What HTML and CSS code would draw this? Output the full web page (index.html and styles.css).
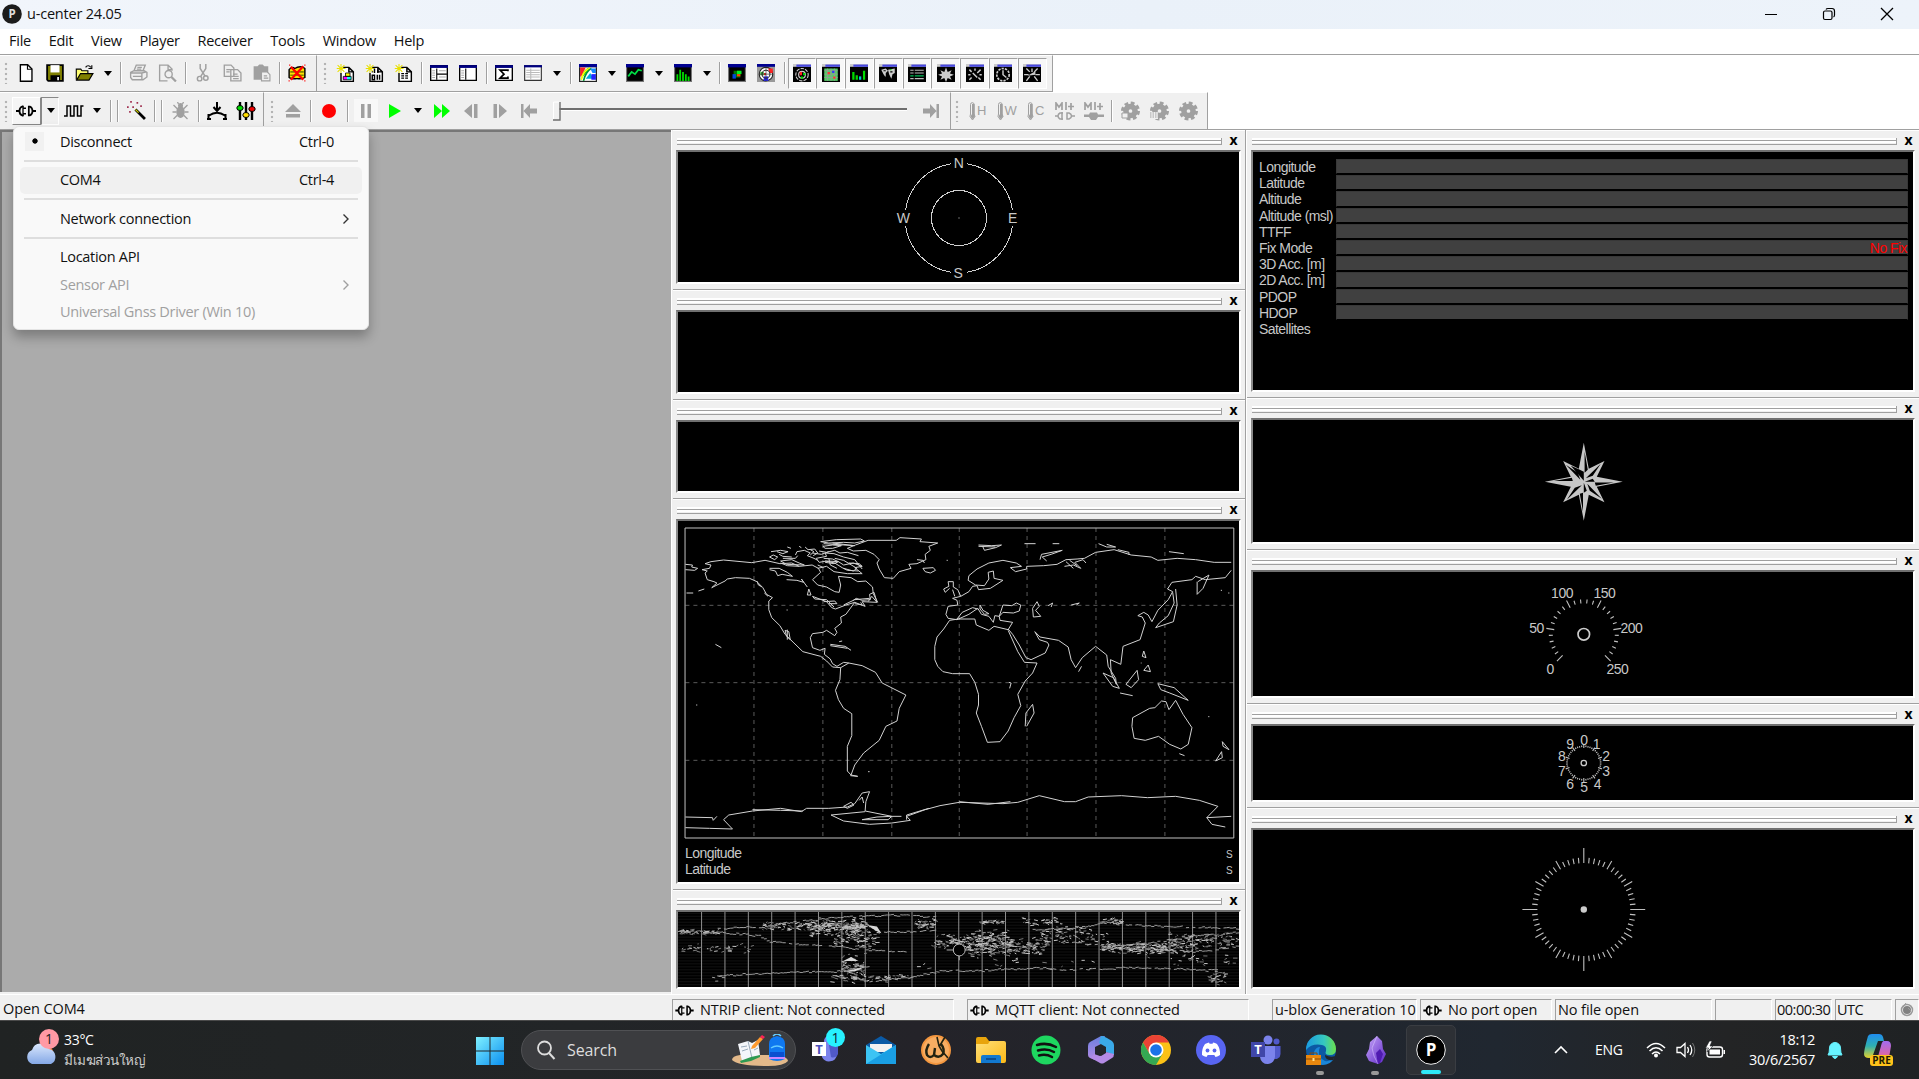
FILE: index.html
```html
<!DOCTYPE html>
<html lang="en">
<head>
<meta charset="utf-8">
<title>u-center 24.05</title>
<link rel="stylesheet" href="styles.css">
</head>
<body>
<svg class="defs" width="0" height="0">
<defs>
<linearGradient id="gw" x1="0" y1="0" x2="1" y2="1"><stop offset="0" stop-color="#7ff0ff"/><stop offset="1" stop-color="#0a8ff0"/></linearGradient>
<linearGradient id="gc" x1="0" y1="0" x2="0" y2="1"><stop offset="0" stop-color="#dbe8fd"/><stop offset="1" stop-color="#84a8e6"/></linearGradient>
<linearGradient id="ge" x1="0" y1="0" x2="1" y2="0"><stop offset="0" stop-color="#1a9be0"/><stop offset=".6" stop-color="#35c7c0"/><stop offset="1" stop-color="#6be04a"/></linearGradient>
<linearGradient id="go" x1="0" y1="0" x2="1" y2="1"><stop offset="0" stop-color="#c9a8fb"/><stop offset="1" stop-color="#5a25c4"/></linearGradient>
<linearGradient id="gm" x1="0" y1="0" x2="0" y2="1"><stop offset="0" stop-color="#6a7fe0"/><stop offset="1" stop-color="#b48be6"/></linearGradient>
<linearGradient id="gf" x1="0" y1="0" x2="1" y2="1"><stop offset="0" stop-color="#ffe07a"/><stop offset="1" stop-color="#fcb916"/></linearGradient>
<linearGradient id="gp" x1="0" y1="0" x2="0" y2="1"><stop offset="0" stop-color="#1f8df0"/><stop offset=".5" stop-color="#2fb0b0"/><stop offset="1" stop-color="#e6d22a"/></linearGradient>
<linearGradient id="gq" x1="0" y1="0" x2="0" y2="1"><stop offset="0" stop-color="#a06cf0"/><stop offset="1" stop-color="#f0648c"/></linearGradient>
<symbol id="new" viewBox="0 0 16 16"><path d="M3 .7h6.500l3.800 3.800v10.800H3z" fill="#fff" stroke="#000" stroke-width="1.200"/><path d="M9.300.7v4h4" fill="none" stroke="#000"/></symbol>
<symbol id="save" viewBox="0 0 16 16"><path d="M1 1h14v14H2l-1-1z" fill="#808000" stroke="#000" stroke-width="1.600"/><path d="M4 1h8v6.500H4z" fill="#fff"/><path d="M4 10h8.500v5H4z" fill="#000"/><path d="M10 11.500h1.500v3H10z" fill="#fff"/></symbol>
<symbol id="open" viewBox="0 0 16 16"><path d="M.7 14V4.500h4l1 1.500H11v2.500" fill="#ffff70" stroke="#000"/><path d="M1 14.300 4.500 8.500h11L12 14.300z" fill="#808000" stroke="#000"/><path d="M9 3c1-2 3.500-2 4.500 0M14.500 1v3h-3" fill="none" stroke="#000"/></symbol>
<symbol id="print" viewBox="0 0 16 16"><g fill="none" stroke="#a0a0a0" stroke-width="1.200"><path d="M4 6 6 1h8l-2 5M1 7.500 4 6h9l2.500 1.500v4L12 14H2.500L1 12z M1 8h10l4-1M3 11h8M7 3h4M6.500 4.500h4M11 8v6"/></g></symbol>
<symbol id="prev" viewBox="0 0 16 16"><g fill="none" stroke="#a0a0a0" stroke-width="1.200"><path d="M8 15H1V1h7.500L12 4.500V6M8.500 1v4H12"/><circle cx="9" cy="9" r="3.200"/><path d="m11.500 11.500 4 4" stroke-width="2"/></g></symbol>
<symbol id="cut" viewBox="0 0 16 16"><g fill="none" stroke="#a0a0a0" stroke-width="1.300"><path d="M5.500 0v4l4.500 7M10.500 0v4L6 11"/><circle cx="5" cy="13" r="2"/><circle cx="10.500" cy="12.500" r="2"/></g></symbol>
<symbol id="copy" viewBox="0 0 16 16"><g fill="#f0f0f0" stroke="#a0a0a0" stroke-width="1.200"><path d="M.7 1h6l2.500 2.500V11H.7zM6.500 5h6l3 3v7h-9z"/><path d="M2.500 5h4M2.500 7h3M8.500 9h4M8.500 11h5M8.500 13h5"/></g></symbol>
<symbol id="paste" viewBox="0 0 16 16"><path d="M1 2h3.500L6 .5h3L10.500 2H14v6H8v6H1z" fill="#a0a0a0"/><path d="M8 7h5l2.500 2.500V15H8zM10 10.500h3M10 12.500h4" fill="#f0f0f0" stroke="#a0a0a0"/></symbol>
<symbol id="del" viewBox="0 0 16 16"><path d="M1 5c2-3 4-2 5-1 3-2 7-2 9 0v8c-3 2-5 1-7 1s-5 1-7-1z" fill="#ffe000" stroke="#000" stroke-width="1.300"/><path d="M2 7h12M2 10h12" stroke="#808000" stroke-width="1.500"/><path d="m2.500 2.500 11 11.500M13.500 2 2.500 14" stroke="#f00" stroke-width="2"/><path d="M1 1h1M14.500 1h1M.5 15h1M14.500 15h1" stroke="#f00"/></symbol>
<symbol id="star" viewBox="0 0 16 16"><path d="M6 3h5l4 4v8.500H4V8M11 3v4h4" fill="#fff" stroke="#000" stroke-width="1.300"/><path d="M4 0v8M0 4h8M1 1l6 6M7 1 1 7" stroke="#e8e000" stroke-width=".9"/></symbol>
<symbol id="n1" viewBox="0 0 16 16"><use href="#star"/><path d="M8 8h4v3H8z" fill="#ff0"/><path d="M6 11h3.500v3H6z" fill="#f0f"/><path d="M9.500 11H13v3H9.500z" fill="#0ff"/><path d="M8 8h4v3H8zM6 11h7v3H6z" fill="none" stroke="#000" stroke-width=".7"/></symbol>
<symbol id="n2" viewBox="0 0 16 16"><use href="#star"/><path d="M8 4v4M11 5v3M6 10h2v4H6zM10.500 9.500V14M12.500 9.500V14M5.500 7h1" fill="none" stroke="#000" stroke-width="1.300"/></symbol>
<symbol id="n3" viewBox="0 0 16 16"><use href="#star"/><path d="M6 8.500h7M6 10.500h7M6 12.500h7" fill="none" stroke="#000" stroke-dasharray="2.500 1"/></symbol>
<symbol id="w1" viewBox="0 0 16 16"><path d="M.6 1.500h14.800v13H.6z" fill="#fff" stroke="#000" stroke-width="1.200"/><path d="M0 1h16v2.500H0z" fill="#000080"/><path d="M6 4v10M6 9h9" stroke="#000"/><path d="M2 6h2.500M2 8h2.500M2 10h2.500M2 12h2.500M8 6h6M8 11.500h6" stroke="#aaa"/></symbol>
<symbol id="w2" viewBox="0 0 16 16"><path d="M.6 1.500h14.800v13H.6z" fill="#fff" stroke="#000" stroke-width="1.200"/><path d="M0 1h16v2.500H0z" fill="#000080"/><path d="M6 4v10" stroke="#000"/><path d="M2 6h2.500M2 8h2.500M2 10h2.500M2 12h2.500" stroke="#aaa"/></symbol>
<symbol id="sg" viewBox="0 0 16 16"><path d="M.6 1.500h14.800v13H.6z" fill="#fff" stroke="#000" stroke-width="1.200"/><path d="M0 1h16v2.500H0z" fill="#000080"/><path d="M11.500 6.500V5.500h-7l3.500 3.500L4.500 12.500h7v-1.500" fill="none" stroke="#000" stroke-width="1.500"/></symbol>
<symbol id="tb" viewBox="0 0 16 16"><path d="M.6 1.500h14.800v13H.6z" fill="#fff" stroke="#333"/><path d="M0 1h16v2H0z" fill="#000080"/><path d="M2 5.500h12M2 7.500h12M2 9.500h12M2 11.500h12M6 4v10" stroke="#bbb"/></symbol>
<symbol id="bw" viewBox="0 0 16 16"><path d="M0 0h16v16H0z" fill="#777"/><path d="M1 1h14v14H1z" fill="#000"/><path d="M0 0h16v3H0z" fill="#000090"/></symbol>
<symbol id="c1" viewBox="0 0 16 16"><use href="#bw"/><path d="M1 3h14v12H1z" fill="#fff"/><path d="M1 3h5L2 11H1z" fill="#f22"/><path d="M2 15C2 8 6 3 10 3l-7 9z" fill="#0c0"/><path d="M2 14C3 9 6 5 10 3.500" fill="none" stroke="#ff0" stroke-width="1.500"/><path d="M4 15C5 10 8 5 11 4" fill="none" stroke="#093" stroke-width="1.500"/><path d="M10 4h5v4h-3z" fill="#18f"/><path d="m6 13 4-5 3 5z" fill="#0ad"/><path d="M11 9h4v5h-4z" fill="#22f"/><path d="M.5 3v12.500h15V3" fill="none" stroke="#222"/></symbol>
<symbol id="c2" viewBox="0 0 16 16"><use href="#bw"/><path d="m2 11 3-4 3 2 3-4 3 1" fill="none" stroke="#0d4" stroke-width="1.500"/></symbol>
<symbol id="c3" viewBox="0 0 16 16"><use href="#bw"/><path d="M3 15V9M5.500 15V5M8 15V7M10.500 15V9M13 15v-4" stroke="#0d0" stroke-width="1.600"/></symbol>
<symbol id="c4" viewBox="0 0 16 16"><use href="#bw"/><path d="M5 6h6v6H5z" fill="#070"/><path d="M8 6h4v3H8z" fill="#0e2"/><path d="M4 9h3v4H4z" fill="#04d"/><path d="M8 9h3v2H8z" fill="#f40"/></symbol>
<symbol id="c5" viewBox="0 0 16 16"><path d="M0 0h16v16H0z" fill="#999"/><path d="M0 0h16v2.500H0z" fill="#000090"/><circle cx="8" cy="9" r="6" fill="#fff" stroke="#222"/><path d="M10 4h4v4h-3zM6 8h2v2H6z" fill="#f22"/><path d="M6 11h4v4H6z" fill="#22f"/><path d="M3 7h3v3H3z" fill="#3b3"/><circle cx="8" cy="9" r="3.500" fill="none" stroke="#333"/><path d="M8 3v12M2 9h12" stroke="#333" stroke-width=".6"/></symbol>
<symbol id="dk" viewBox="0 0 16 16"><path d="M0 0h16v16H0z" fill="#000"/><path d="M0 0h16v2.500H0z" fill="#ccc"/><path d="M3 .5h13v2H3z" fill="#4848e0"/></symbol>
<symbol id="d1" viewBox="0 0 16 16"><use href="#dk"/><g fill="none" stroke="#ccc"><circle cx="8" cy="9.500" r="5.500" stroke-dasharray="3 1"/><circle cx="8" cy="9.500" r="3"/></g><path d="M6 7h2v3H6z" fill="#f22"/><path d="M9 8h2v2H9zM7 11h2v2H7z" fill="#0d0"/></symbol>
<symbol id="d2" viewBox="0 0 16 16"><use href="#dk"/><path d="M2 4h12v11H2z" fill="#5c6"/><path d="M2 6h12M2 9h12M2 12h12M5 4v11M8 4v11M11 4v11" stroke="#999" stroke-width=".7"/><path d="M5 7h2v2H5zM10 11h2v2h-2z" fill="#f33"/><path d="M9 6h2v2H9z" fill="#33f"/></symbol>
<symbol id="d3" viewBox="0 0 16 16"><use href="#dk"/><path d="M3 14V7M6 14v-4M12.500 14V6" stroke="#0d0" stroke-width="2"/><path d="M9 14v-3" stroke="#0cc" stroke-width="2"/></symbol>
<symbol id="d4" viewBox="0 0 16 16"><use href="#dk"/><path d="m2 5 4-1 2 2-2 2v4l-2-3zM8 5l6-1v4l-2 1-1 4-2-4z" fill="#ccc"/><path d="M4 6h2M10 7h2M6 11v2" stroke="#000"/><path d="M10 5h1" stroke="#0d0"/></symbol>
<symbol id="d5" viewBox="0 0 16 16"><use href="#dk"/><path d="M2 5.500h3M6 5.500h8M2 8h3M6 8h8M2 13h3M6 13h8" stroke="#bbb"/><path d="M2 10.500h3M6 10.500h8" stroke="#0b5"/></symbol>
<symbol id="d6" viewBox="0 0 16 16"><use href="#dk"/><path d="m8 3 1.500 4L13 5.500 11.500 8.500 15 9.500l-3.500 1.500L13 14l-3.500-1.500L8 16l-1.500-3.500L3 14l1.500-3L1 9.500l3.500-1L3 5.500 6.500 7z" fill="#ccc"/></symbol>
<symbol id="d7" viewBox="0 0 16 16"><use href="#dk"/><path d="m3 5 2 2M8 4v2M13 5l-3 3M2 9.500h2M12 9.500h2M3 14l2-2M13 14l-2-2M6 8l4 4" stroke="#ccc" stroke-width="1.300"/></symbol>
<symbol id="d8" viewBox="0 0 16 16"><use href="#dk"/><circle cx="8" cy="9.500" r="5.500" fill="none" stroke="#ccc" stroke-width="1.500" stroke-dasharray="2 1"/><path d="M8 5.500V9.500l3 2.500" stroke="#ccc" fill="none" stroke-width="1.300"/></symbol>
<symbol id="d9" viewBox="0 0 16 16"><use href="#dk"/><path d="m3 4 3 3M8 4v3M13 4l-3 3M1 9.500h4M11 9.500h4M3 15l3-4M13 15l-3-4" stroke="#ccc" stroke-width="1.200"/><path d="m4 10.500 7-4v3z" fill="#ccc"/></symbol>
<symbol id="conn" viewBox="0 0 20 12"><path d="M0 6h4M16 6h4" stroke="#000" stroke-width="2"/><path d="M7.500 1.500H6.200Q3.500 2.500 3.500 6t2.700 4.500h1.300" fill="none" stroke="#000" stroke-width="1.800"/><path d="M7 1v10" stroke="#000" stroke-width="1.300"/><path d="M7 3.200h3M7 8.800h3" stroke="#000" stroke-width="1.500"/><path d="M12.800 1.500h1q2.700 1.200 2.700 4.500t-2.700 4.500h-1z" fill="#f4f4f4" stroke="#000" stroke-width="1.700"/></symbol>
<symbol id="wave" viewBox="0 0 20 12"><path d="M0 11h3V1h3.500v10H10V1h3.500v10H17V1h2.500" fill="none" stroke="#000" stroke-width="1.500"/></symbol>
<symbol id="wand" viewBox="0 0 18 18"><path d="m8 8 9 9" stroke="#000" stroke-width="2.600"/><path d="m8 8 3 3" stroke="#cc0" stroke-width="1.200"/><g fill="#a03050"><path d="M3 0h1.600v1.600H3zM9 1h1.600v1.600H9zM0 5h1.600v1.600H0zM5 5h1.600v1.600H5zM12.500 4h1.600v1.600h-1.600zM2 9.500h1.600v1.600H2z"/></g></symbol>
<symbol id="bug" viewBox="0 0 16 18"><ellipse cx="8" cy="10" rx="4.200" ry="6" fill="#a0a0a0"/><circle cx="8" cy="3.500" r="2.500" fill="#a0a0a0"/><path d="m5 7-4-4M11 7l4-4M4 10H0M12 10h4M5 13l-4 4M11 13l4 4M6 2 5 0M10 2l1-2" stroke="#a0a0a0" stroke-width="1.300"/></symbol>
<symbol id="base" viewBox="0 0 20 18"><path d="M10 0v8M6.500 5 10 9l3.500-4M2 13.500Q10 8 18 13.500M1.500 12v5M18.500 12v5M0 17h4M16 17h4" fill="none" stroke="#000" stroke-width="2"/></symbol>
<symbol id="mix" viewBox="0 0 20 18"><path d="M4 0v18M10 0v18M16 0v18" stroke="#000" stroke-width="2.400"/><ellipse cx="4" cy="6" rx="3.200" ry="2.500" fill="#0d0" stroke="#000"/><ellipse cx="10" cy="13" rx="3.200" ry="2.500" fill="#fd0" stroke="#000"/><ellipse cx="16" cy="7" rx="3.200" ry="2.500" fill="#e00" stroke="#000"/></symbol>
<symbol id="gear" viewBox="0 0 20 20"><circle cx="10.500" cy="10" r="4.600" fill="none" stroke="#a0a0a0" stroke-width="5.500"/><circle cx="10.500" cy="10" r="8" fill="none" stroke="#a0a0a0" stroke-width="3" stroke-dasharray="3.780 2.500"/></symbol>
<symbol id="th" viewBox="0 0 7 18"><path d="M1.500 2.500a1.800 1.800 0 0 1 3.600 0V12L6 14.500 3.500 18 1 14.500 1.500 12z" fill="none" stroke="#a0a0a0"/><path d="M3 2h2.500v10L6 14.500 3.500 17 1.500 14.500 3 12z" fill="#a0a0a0"/></symbol>
<symbol id="teams" viewBox="0 0 30 30"><circle cx="17" cy="5" r="4.500" fill="#7b83eb"/><circle cx="25.500" cy="6.500" r="3" fill="#5059c9"/><path d="M20 11h9.500v8a5 5 0 0 1-8 4z" fill="#5059c9"/><path d="M9 11h15v10a7 7 0 0 1-15 1z" fill="#7b83eb"/><path d="M0 7h14v15H0z" fill="#4046a8"/><text x="7" y="19" font-size="13" font-weight="700" fill="#fff" text-anchor="middle">T</text></symbol>
</defs>
</svg>

<div class="title">
  <svg width="20" height="20" viewBox="0 0 20 20"><circle cx="10" cy="10" r="9.800" fill="#1c1c1c"/><text x="10" y="14" font-size="11.500" font-weight="700" fill="#ddd" text-anchor="middle">P</text></svg>
  <span class="name">u-center 24.05</span>
  <div class="wc">
    <svg width="14" height="14"><path d="M1 7.500h12" stroke="#000"/></svg>
    <svg width="14" height="14"><rect x="1.500" y="4" width="8.500" height="8.500" rx="1.500" fill="none" stroke="#000" stroke-width="1.200"/><path d="M4 2.500Q4.500 1.500 6 1.500h4q2.500 0 2.500 2.500v4q0 1.500-1 2" fill="none" stroke="#000" stroke-width="1.200"/></svg>
    <svg width="14" height="14"><path d="m1 1 12 12M13 1 1 13" stroke="#000" stroke-width="1.300"/></svg>
  </div>
</div>
<div class="menu"><span>File</span><span>Edit</span><span>View</span><span>Player</span><span>Receiver</span><span>Tools</span><span>Window</span><span>Help</span></div>

<div class="bar">
  <div class="band b1"><i class="grip"></i>
    <b><svg class="i"><use href="#new"/></svg></b><b><svg class="i"><use href="#save"/></svg></b><b><svg class="i w"><use href="#open"/></svg></b><u></u><s></s>
    <b><svg class="i w"><use href="#print"/></svg></b><b><svg class="i w"><use href="#prev"/></svg></b><s></s>
    <b><svg class="i"><use href="#cut"/></svg></b><b><svg class="i w"><use href="#copy"/></svg></b><b><svg class="i w"><use href="#paste"/></svg></b><s></s>
    <b><svg class="i"><use href="#del"/></svg></b></div>
  <div class="band b2"><i class="grip"></i>
    <b><svg class="i w"><use href="#n1"/></svg></b><b><svg class="i w"><use href="#n2"/></svg></b><b><svg class="i w"><use href="#n3"/></svg></b><s></s>
    <b><svg class="i"><use href="#w1"/></svg></b><b><svg class="i"><use href="#w2"/></svg></b><s></s>
    <b><svg class="i"><use href="#sg"/></svg></b><b><svg class="i"><use href="#tb"/></svg></b><u></u><s></s>
    <b><svg class="i"><use href="#c1"/></svg></b><u></u><b><svg class="i"><use href="#c2"/></svg></b><u></u><b><svg class="i"><use href="#c3"/></svg></b><u></u><s></s>
    <b><svg class="i"><use href="#c4"/></svg></b><b><svg class="i"><use href="#c5"/></svg></b><s></s>
    <b class="on"><svg class="i"><use href="#d1"/></svg></b><b class="on"><svg class="i"><use href="#d2"/></svg></b><b class="on"><svg class="i"><use href="#d3"/></svg></b><b class="on"><svg class="i"><use href="#d4"/></svg></b><b class="on"><svg class="i"><use href="#d5"/></svg></b><b class="on"><svg class="i"><use href="#d6"/></svg></b><b class="on"><svg class="i"><use href="#d7"/></svg></b><b class="on"><svg class="i"><use href="#d8"/></svg></b><b class="on"><svg class="i"><use href="#d9"/></svg></b></div>
</div>
<div class="bar bar2">
  <div class="band c1"><i class="grip"></i>
    <b class="up"><svg width="20" height="12"><use href="#conn"/></svg></b><u class="dn"></u><b><svg width="20" height="12"><use href="#wave"/></svg></b><u></u><s></s><s></s>
    <b><svg width="19" height="19"><use href="#wand"/></svg></b><s></s><s></s><b><svg width="17" height="18"><use href="#bug"/></svg></b><s></s>
    <b><svg width="20" height="18"><use href="#base"/></svg></b><b><svg width="20" height="18"><use href="#mix"/></svg></b></div>
  <div class="band c2"><i class="grip"></i>
    <b><svg width="16" height="14"><path d="m8 0 8 8H0zM1 10h14v3.500H1z" fill="#a0a0a0"/></svg></b><s></s>
    <b><svg width="16" height="16"><circle cx="8" cy="8" r="7" fill="#f00"/></svg></b><s></s>
    <b class="pause"><svg width="12" height="16"><path d="M1 1h3.500v14H1zM7.500 1H11v14H7.500z" fill="#a0a0a0"/></svg></b>
    <b><svg width="14" height="14"><path d="m1 0 12 7-12 7z" fill="#0f0"/></svg></b><u></u>
    <b><svg width="16" height="14"><path d="m0 0 8 7-8 7zM8 0l8 7-8 7z" fill="#0f0"/></svg></b>
    <b><svg width="14" height="14"><path d="M8 0v14L0 7zM10 0h3.500v14H10z" fill="#a0a0a0"/></svg></b>
    <b><svg width="14" height="14"><path d="M6 0v14l8-7zM.5 0H4v14H.5z" fill="#a0a0a0"/></svg></b>
    <b><svg width="16" height="14"><path d="M0 0h2.500v14H0zM9 0v4.500h7v5H9V14L2.500 7z" fill="#a0a0a0"/></svg></b>
    <svg width="373" height="24"><path d="M14 10h350" stroke="#6e6e6e" stroke-width="2"/><path d="M14 11.500h350" stroke="#fff"/><path d="M10.500 3h6v18h-6z" fill="#f0f0f0"/><path d="M10.500 21V3h6" fill="none" stroke="#fff"/><path d="M10 21h7V3" fill="none" stroke="#6e6e6e" stroke-width="1.400"/></svg>
    <b><svg width="16" height="14"><path d="M13.500 0H16v14h-2.500zM7 0v4.500H0v5h7V14l6.500-7z" fill="#a0a0a0"/></svg></b></div>
  <div class="band c3"><i class="grip"></i>
    <b class="t"><svg width="7" height="18"><use href="#th"/></svg>H</b><b class="t"><svg width="7" height="18"><use href="#th"/></svg>W</b><b class="t"><svg width="7" height="18"><use href="#th"/></svg>C</b>
    <b><svg width="20" height="18"><path d="M1 8V1l3 4 3-4v7M11 0v8M13 4.500h6M16 1v7" fill="none" stroke="#a0a0a0" stroke-width="1.700"/><path d="M0 14h3M17 14h3M8 11H5q-2 1-2 3t2 3h3M7 10v8M12 11h2q2.500 1 2.500 3T14 17h-2z" fill="none" stroke="#a0a0a0" stroke-width="1.500"/></svg></b>
    <b><svg width="20" height="18"><path d="M1 8V1l3 4 3-4v7M11 0v8M13 4.500h6M16 1v7" fill="none" stroke="#a0a0a0" stroke-width="1.700"/><path d="M0 12.500h5l1-2h7l1 2h6V15h-6l-2 3H7l-2-3H0z" fill="#a0a0a0"/></svg></b><s></s>
    <b><svg width="20" height="20"><use href="#gear"/><path d="M2 12h6v5H2z" fill="#f0f0f0" stroke="#a0a0a0"/></svg></b>
    <b><svg width="20" height="20"><use href="#gear"/><path d="M1 11h8v7H1z" fill="#f0f0f0"/><path d="M1 12h8M1 14h8M1 16h8" stroke="#a0a0a0" stroke-dasharray="1.500 1"/></svg></b>
    <b><svg width="20" height="20"><use href="#gear"/></svg></b></div>
</div>

<div class="work">
  <div class="mdi"></div>
  <div class="dock left">
    <div class="pane" style="height:160px"><div class="head"><i></i><em>x</em></div><div class="view">
      <svg viewBox="678 152 561 130"><g fill="none" stroke="#d0d0d0" class="crisp"><circle cx="959" cy="218" r="27.500"/><path d="M951 163.700A55 55 0 0 0 905.500 210M905.500 226A55 55 0 0 0 951 272.300M967 272.300A55 55 0 0 0 1012.500 226M1012.500 210A55 55 0 0 0 967 163.700"/></g><path d="M958.500 217.500h1v1h-1z" fill="#ccc"/><g class="lbl"><text x="958.500" y="167.500">N</text><text x="958" y="277.500">S</text><text x="903" y="223">W</text><text x="1012.500" y="223">E</text></g></svg></div></div>
    <div class="pane" style="height:110px"><div class="head"><i></i><em>x</em></div><div class="view"></div></div>
    <div class="pane" style="height:99px"><div class="head"><i></i><em>x</em></div><div class="view"></div></div>
    <div class="pane" style="height:391px"><div class="head"><i></i><em>x</em></div><div class="view map">
      <svg viewBox="23 64 1514 1083" preserveAspectRatio="none">
        <path class="grid" d="M228 85V1014M414 85V1014M600 85V1014M782 85V1014M965 85V1014M1151 85V1014M1337 85V1014M43 317H1522M43 549H1522M43 782H1522"/>
        <path class="edge" d="M42 85H1523V1015H42z"/>
        <g class="coast">
        <path d="M43 194 62 196 60 202 76 206 68 212 43 210M88 210 108 206 112 196 96 192 112 186 146 181 222 189 258 182 298 192 330 190 350 200 385 196 402 206M88 210 102 214 96 220 102 240 120 246 128 250 114 264 150 244 156 238 178 234 216 236 236 246 252 264 262 284 278 294 268 304 268 330 276 354 298 378 312 404 336 430 360 456 408 470 424 484 440 502 462 504"/>
        <path d="M236 244 240 256 250 262M256 280 266 290M312 392 322 396 326 420 316 410 312 392M318 390V420M462 504 484 490 470 488 452 500 440 492 434 478 418 464 420 446 406 452 386 444 380 414 386 402 414 398 424 392 446 408 452 398 446 386 464 370 462 352 476 344 500 308 476 316 448 328 438 324 424 306 386 290 392 298 424 300 444 322M500 308 528 320 520 306 560 308 552 278 540 284 542 300 520 302 504 296 496 302M560 308 546 290 536 306M372 286 376 268 382 286 372 286M416 306 446 304 452 312 430 312M470 316 500 300 540 296M500 312 520 316 516 308"/>
        <path d="M402 206 408 218 386 240 400 256 424 262 446 276 458 278 462 256 456 230 490 234 508 246 530 244 548 262 550 282 562 308M400 206 424 200 444 216 480 222 520 222 500 204 520 200 496 190 470 196 456 186 424 184 404 188 396 176 424 170 420 160 444 162 470 172 500 180 520 208M316 240 344 242 362 248 356 238 372 262M270 206 296 206 318 218 332 230 304 224 292 228 286 214 270 210M270 172 280 166 292 172 284 180 270 172M274 156 300 152 320 156 306 162 290 156M300 184 330 180 350 190 364 196 316 194 300 184M340 166 344 156 364 152 380 160 372 168 390 176 400 182M366 142 374 150 392 148 400 160 388 168M318 142 328 146M350 140 356 144M404 154 424 158 446 152 460 160 480 158 510 168M414 140 440 136 464 138 440 146 420 146zM408 126 450 120 516 118 526 124 500 130 470 128 430 130 408 126M416 132 470 136 500 138 440 130M446 176 470 182 506 206 496 214 470 206M306 176 340 176 346 168M430 176 434 196 452 206M296 164 306 170 330 172M380 150 390 156 380 166M420 184 446 190 466 204 480 212 510 214M400 196 416 204M300 190 318 198 350 200M386 160 410 164 430 156M416 176 440 178 456 186 444 192 420 188M484 190 512 192 520 200"/>
        <path d="M502 136 536 122 612 122 622 114 680 118 676 126 724 130 700 140 704 152 690 164 692 180 668 192 646 194 652 206 620 216 604 236 580 234 566 208 560 190 566 180 552 164 530 152 496 154 480 146 502 136M668 180 684 182 688 190M684 206 712 204 718 212 704 220 690 216zM740 268 754 260 752 246 766 246 766 262 778 270 786 290 764 296 776 302 778 316 752 320 746 344 752 356 776 360 808 344 832 326 842 344 862 350 874 368 878 348 890 350 892 362 926 368 914 390 876 380 862 392 828 376 824 358 780 358 756 362 740 388 722 412 716 440 716 480 724 500 738 516 764 522 810 522 824 548 834 584 834 616 828 640 842 680 858 728 892 726 914 694 930 654 948 618 940 584 960 544 980 520 992 490 958 488 940 456 914 392M740 268 744 278 756 266M764 270 770 290M786 290 808 276 818 260 830 258 834 270 866 266 900 242 876 236 874 214 860 218 862 238 850 258 826 256 806 242 808 228 830 208 862 190 900 182 936 190 950 200 920 204 934 216 964 208 964 200 1010 198 1046 194 1070 180 1100 178 1120 176 1150 158 1200 150 1246 166 1300 172 1318 182 1370 176 1420 180 1470 188 1516 188M838 316 846 332 862 342 850 344 838 328zM776 358 790 338 818 324 832 328M890 350 900 316 924 318 936 310 948 316 944 334 928 340 900 338 890 350M980 326 992 306 998 320 988 332 1002 350 982 352 980 326M1022 318 1034 310 1030 322M1084 316 1106 310 1098 316M914 388 926 404 944 436 962 474 976 480 1014 460 1024 436 1020 428 998 420 986 396 1000 412 1050 422 1076 442 1084 480 1096 504 1114 474 1150 440 1180 466 1184 500 1204 536 1206 554 1192 520 1190 480 1218 494 1224 440 1270 420 1284 370 1276 352 1264 348 1280 338 1292 346 1302 366 1318 332 1346 300 1358 276 1344 268 1356 248 1410 240 1420 230 1446 240 1500 234 1516 212"/>
        <path d="M1366 268 1370 316 1360 366 1312 384 1322 370 1346 348 1362 310 1358 278M1426 246 1456 226 1440 266 1424 284 1424 246M834 136 870 138 896 136 880 144 850 152 846 142M834 140 880 142M958 132H988M1000 180 1004 164 1060 152 1030 164 1006 172 1018 184M1158 132 1180 142 1204 142 1180 134M1210 150 1240 158 1240 166M1348 156 1388 162M1066 200 1090 196 1110 206 1094 188 1116 180 1124 190M1070 186 1090 206M1080 182 1100 198M1034 132H1052M960 680 962 640 980 614 984 640 964 680M916 548 922 550 918 566M1104 516 1112 500M1170 520 1198 534 1214 566 1196 560 1170 520M1232 554 1262 512 1266 540 1246 564 1232 554M1216 580 1250 588M1276 470 1280 454 1286 474 1276 470M1280 512 1292 496 1298 516 1280 512M1318 552 1362 564 1400 602 1350 580 1326 570zM1250 654 1296 626 1310 624 1328 604 1340 606 1348 630 1366 602 1386 644 1410 684 1400 734 1380 748 1350 734 1320 710 1284 722 1254 716 1248 680 1250 654M1376 762 1390 768M1474 784 1490 756 1492 774 1474 784M1492 726 1510 750 1494 740z"/>
        <path d="M462 504 460 540 448 572 456 600 470 626 492 642 492 708 480 740 480 814 490 826 508 830 488 828M490 826 500 796 524 760 566 722 584 680 614 664 620 626 638 586 574 550 556 518 520 498 484 490M434 434 474 440 490 452M434 438 480 446M458 426 466 424M124 434 140 444M46 280 64 280M78 274 94 268M536 816h4M72 616h3M404 549h3M748 182h3M316 331h3M1454 651h3M1488 272h3M1508 280h3M1272 490h2"/>
        <path d="M43 952 116 954 118 962 128 950M43 984 108 986 170 988 146 960 160 946 224 934 300 926 356 936 370 926 430 926 480 922 500 912 520 880 540 876 530 906 528 934 600 950 590 960 520 960 560 952 600 950M470 920 490 908 498 916 480 926 470 920M512 902 520 892 524 910M436 946 528 936M436 946 470 964 540 974 600 970 650 962 640 950 690 930 730 918 782 908 900 912 940 908 998 888 1066 906 1096 906 1130 892 1220 888 1290 894 1366 890 1430 902 1480 920 1450 954 1516 950M1450 954 1464 974 1500 982M224 930 300 932 360 934M782 906 860 914 920 906M600 950H626M640 960V946L700 926"/>
        </g>
      </svg>
      <div class="pos"><span>Longitude</span><span>S</span></div><div class="pos"><span>Latitude</span><span>S</span></div></div></div>
    <div class="pane" style="height:105px"><div class="head"><i></i><em>x</em></div><div class="view">
      <svg id="sky" viewBox="23 1236 1514 227" preserveAspectRatio="none"></svg></div></div>
  </div>
  <div class="dock right">
    <div class="pane" style="height:268px"><div class="head"><i></i><em>x</em></div><div class="view data">
      <p><span>Longitude</span><q></q></p><p><span>Latitude</span><q></q></p><p><span>Altitude</span><q></q></p><p><span>Altitude (msl)</span><q></q></p><p><span>TTFF</span><q></q></p><p><span>Fix Mode</span><q>No Fix</q></p><p><span>3D Acc. [m]</span><q></q></p><p><span>2D Acc. [m]</span><q></q></p><p><span>PDOP</span><q></q></p><p><span>HDOP</span><q></q></p><p><span>Satellites</span></p></div></div>
    <div class="pane" style="height:152px"><div class="head"><i></i><em>x</em></div><div class="view">
      <svg viewBox="1253 420 661 122"><g transform="translate(1584.300 481.700)"><path d="M0-39 5-13 20.700-20.700 13-5 39 0 13 5 20.700 20.700 5 13 0 39-5 13-20.700 20.700-13 5-39 0-13-5-20.700-20.700-5-13z" fill="#c6c6c6"/><g fill="#000"><path d="M.8-30 4-12 .8-9zM30 .8 12 4 11 .8zM-.8 30-4 12-.8 11zM-30-.8-12-4-11-.8z"/><path d="M2-3.500 17-18 9-6zM3.500 2 18 17 6 9zM-2 3.500-17 18-9 6zM-3.500-2-18-17-6-9z"/><path d="M0-1V-10L-4-12-13-16zM1 0h10l-2-3zM0 1v10l3-2z"/></g></g></svg></div></div>
    <div class="pane" style="height:154px"><div class="head"><i></i><em>x</em></div><div class="view">
      <svg viewBox="1253 572 661 124"><g transform="translate(1584.300 634.300)"><g id="speed" class="tick"></g><circle r="5.800" fill="none" stroke="#ccc" stroke-width="1.700"/></g><g class="lbl"><text x="1562.500" y="597.500">100</text><text x="1605" y="597.500">150</text><text x="1537" y="633">50</text><text x="1632" y="633">200</text><text x="1550.500" y="674">0</text><text x="1618" y="674">250</text></g></svg></div></div>
    <div class="pane" style="height:104px"><div class="head"><i></i><em>x</em></div><div class="view">
      <svg viewBox="1253 726 661 74"><g transform="translate(1584.300 763)"><g id="clock" class="tick"></g><circle r="2.700" fill="none" stroke="#ccc" stroke-width="1.300"/></g><g class="lbl"><text x="1584.300" y="745">0</text><text x="1597" y="749">1</text><text x="1606.500" y="761.500">2</text><text x="1606.500" y="776">3</text><text x="1598" y="789">4</text><text x="1584.300" y="792.500">5</text><text x="1570.500" y="789">6</text><text x="1562" y="776">7</text><text x="1562" y="761.500">8</text><text x="1570.500" y="749">9</text></g></svg></div></div>
    <div class="pane" style="height:187px"><div class="head"><i></i><em>x</em></div><div class="view">
      <svg viewBox="1253 830 661 157"><g transform="translate(1584.300 909.500)"><g id="head" class="tick"></g><circle r="3.200" fill="#ccc"/></g></svg></div></div>
  </div>
</div>

<div class="status">
  <span class="msg">Open COM4</span>
  <span class="cell" style="width:282px"><svg width="19" height="11"><use href="#conn"/></svg>NTRIP client: Not connected</span>
  <span class="cell" style="width:282px;margin-left:13px"><svg width="19" height="11"><use href="#conn"/></svg>MQTT client: Not connected</span>
  <span class="cell" style="width:145px;margin-left:23px">u-blox Generation 10</span>
  <span class="cell" style="width:132px;margin-left:3px"><svg width="19" height="11"><use href="#conn"/></svg>No port open</span>
  <span class="cell" style="width:157px;margin-left:3px">No file open</span>
  <span class="cell" style="width:57px;margin-left:3px"></span>
  <span class="cell tight" style="width:57px;margin-left:3px">00:00:30</span>
  <span class="cell tight" style="width:57px;margin-left:3px">UTC</span>
  <span class="cell last"><svg width="14" height="14"><circle cx="7" cy="7" r="5.500" fill="none" stroke="#999" stroke-width="1.500"/><circle cx="7" cy="7" r="4" fill="#808080"/><path d="m3 4 3-4M8 5l3 3" stroke="#999"/></svg></span>
</div>

<div class="task">
  <div class="weather">
    <svg width="44" height="40" viewBox="0 0 44 40"><circle cx="23" cy="24" r="6" fill="#f2742a"/><path d="M8 36a7.500 7.500 0 0 1 0-14 9 9 0 0 1 17-1 8 8 0 0 1 2 15z" fill="url(#gc)"/><circle cx="25" cy="11" r="10" fill="#ff99a4"/><text x="25" y="16" font-size="14" text-anchor="middle" fill="#222">1</text></svg>
    <div><span>33°C</span><span class="th">มีเมฆส่วนใหญ่</span></div>
  </div>
  <svg class="start" width="30" height="30"><path d="M1 1h13.500v13.500H1zM15.500 1H29v13.500H15.500zM1 15.500h13.500V29H1zM15.500 15.500H29V29H15.500z" fill="url(#gw)"/></svg>
  <div class="search">
    <svg width="20" height="20"><circle cx="8.500" cy="8" r="6.500" fill="none" stroke="#ddd" stroke-width="1.800"/><path d="m13 13 5.500 6" stroke="#ddd" stroke-width="2"/></svg><span>Search</span>
    <svg class="art" width="58" height="32" viewBox="0 0 58 32"><path d="M1 26q0-4 8-5h40q8 3 8 6-4 5-20 5-30 0-36-6z" fill="#e3b98a"/><path d="m7 10 10-3 4 2 6-3 2 15-8 3-10 3z" fill="#f4f6fa"/><path d="M17 7 21 24M10 13l6-1M11 17l6-2M22 12l4-2M23 16l4-2" stroke="#9ab"/><path d="m9 27 11-4 9-2v2l-9 4-10 2z" fill="#2d9a52"/><path d="m21 12 8-9 3 2-8 9-4 1z" fill="#ff9a2e"/><path d="m29 3 2-2 3 2-2 2z" fill="#f25"/><path d="M38 10q0-7 8-8 8 1 8 8v15q-8 4-16 0z" fill="#0f78f0"/><path d="M42 2q4-4 8 0M40 14q6-4 12 0" fill="none" stroke="#6cf" stroke-width="1.500"/><path d="M39 18h14v7H39z" fill="#0a4fd0"/><path d="M38 24h16" stroke="#c8f" stroke-width="2"/></svg>
  </div>
  <div class="apps">
    <a><svg width="34" height="38" viewBox="0 0 34 38"><circle cx="18" cy="13" r="5" fill="#7b83eb"/><path d="M10 17h16v10a8 8 0 0 1-15 2z" fill="#7b83eb"/><path d="M18 17h9v9a5 5 0 0 1-7 3z" fill="#5059c9"/><path d="M1 14h14v14H1z" fill="#fff"/><text x="8" y="26" font-size="13" font-weight="700" text-anchor="middle" fill="#4b53bc">T</text><circle cx="24.500" cy="9.500" r="9.500" fill="#27f1ff"/><text x="24.500" y="14.500" font-size="14" text-anchor="middle" fill="#123">1</text></svg></a>
    <a><svg width="30" height="30"><path d="M0 10 15 1l15 9-15 10z" fill="#0a5aa6"/><path d="M4 9h22v8H4z" fill="#f2f2f2"/><path d="M0 10v19h30V10L15 19z" fill="#3cc4f4"/><path d="M0 29 30 10v19z" fill="#1a9fe4"/></svg></a>
    <a><svg width="30" height="30"><circle cx="15" cy="15" r="15" fill="#f4973f"/><circle cx="15" cy="15" r="13" fill="#f8ad62"/><path d="M8 9q-4 6-2 11 3 4 7 0l1-7M14 13l-1 7q5 4 9-1 2-5-2-10" fill="none" stroke="#221" stroke-width="2.400"/><path d="m16 2 2 9 3 5 6 7M24 2l-6 10" stroke="#221" stroke-width="1.600" fill="none"/></svg></a>
    <a><svg width="30" height="30"><path d="M0 4q0-2 2-2h8l3 4h15v6H0z" fill="#e8a40c"/><path d="M0 9h12l2-3h14q2 0 2 2v18q0 2-2 2H2q-2 0-2-2z" fill="url(#gf)"/><path d="M5 28v-6q0-2 2-2h16q2 0 2 2v6z" fill="#1279d0"/><path d="M10 24h10" stroke="#0a4f94" stroke-width="2"/></svg></a>
    <a><svg width="30" height="30"><circle cx="15" cy="15" r="14.500" fill="#1ed760"/><path d="M6 10q10-3 19 2M7 15.500q9-2.500 16 1.500M8 20.500q7-2 13 1.500" fill="none" stroke="#111" stroke-width="2.500" stroke-linecap="round"/></svg></a>
    <a><svg width="30" height="30"><path d="M15 1 4 7Q2 8 2 11v9q0 2 2 3l5 2V12l6-3 4-8z" fill="url(#gm)"/><path d="M15 1q3 0 6 2l5 3q2 2 2 4v10l-8-3v-5l-7-4z" fill="#3aa9e8"/><path d="m5 23 9 5q2 1 4 0l8-5q2-1 2-4l-8-2-6 4-6-2z" fill="#b48be6"/><path d="m15 10 5 3v5l-5 3-5-3v-5z" fill="#23262c"/></svg></a>
    <a><svg width="30" height="30" viewBox="-15 -15 30 30"><circle r="15" fill="#fbc116"/><path d="M-13-7.500A15 15 0 0 1 13-7.500L0-7.500-6.500 3.700z" fill="#ea4335"/><path d="M-13-7.500A15 15 0 0 0 0 15L6.500 3.700-6.500 3.700z" fill="#34a853"/><circle r="7.500" fill="#fff"/><circle r="5.800" fill="#1a73e8"/></svg></a>
    <a><svg width="30" height="30"><circle cx="15" cy="15" r="15" fill="#5865f2"/><path d="M9 9q3-1.500 4-1.500l.6 1.300h3L17 7.500q2 0 4 1.500 3.500 5 3 11-2 1.700-4.500 2L18.300 20h-6.600l-1.200 2Q8 21.700 6 20q-.5-6 3-11z" fill="#fff"/><circle cx="11.500" cy="15.500" r="1.900" fill="#5865f2"/><circle cx="18.500" cy="15.500" r="1.900" fill="#5865f2"/></svg></a>
    <a><svg width="30" height="30"><use href="#teams"/></svg></a>
    <a class="run"><svg width="32" height="32" viewBox="0 0 32 32"><circle cx="16" cy="16" r="15" fill="#0c59a4"/><path d="M1 16A15 15 0 0 1 31 15q0 6-6 6-6 0-4-4 1-5-4-6Q7 9 1 16z" fill="url(#ge)"/><path d="M14 16q-1 8 6 11 5 1 9-3-3 7-12 7Q8 28 9 18q2-5 6-5z" fill="#1a86d8"/><path d="M20 21q6 3 10 1l-2 4q-8 1-8-5z" fill="#22262b"/><path d="M1 21h15v10H1z" fill="#e8870e"/><path d="M5 21v-2h7v2M1 25h15" stroke="#8a4a06" fill="none"/><path d="M7.500 24h2v3h-2z" fill="#ffe08a"/></svg></a>
    <a class="run"><svg width="24" height="30"><path d="m13 1 5 5 1 8 3 5-4 8-4 2-9-3-3-6 3-6 1-7z" fill="url(#go)"/><path d="m13 1-5 12 2 8 4 8" fill="none" stroke="#e0d0ff" stroke-opacity=".5"/><path d="m12 18 4-4 3 5-3 9-2 1z" fill="#4f1bb0"/></svg></a>
    <a class="act"><svg width="32" height="32"><circle cx="16" cy="16" r="14.300" fill="#000" stroke="#eee"/><text x="16" y="22" font-size="17" font-weight="700" text-anchor="middle" fill="#fff">P</text></svg></a>
  </div>
  <div class="tray">
    <svg width="14" height="10"><path d="m1 8 6-6 6 6" fill="none" stroke="#fff" stroke-width="1.600"/></svg>
    <span class="eng">ENG</span>
    <svg class="wifi" width="20" height="16"><g fill="none" stroke="#fff" stroke-width="1.500"><path d="M1 6q9-9 18 0M3.500 9q6.500-6.500 13 0M6 12q4-4 8 0"/></g><circle cx="10" cy="13.500" r="2" fill="#fff"/></svg>
    <svg class="snd" width="20" height="18"><path d="M1 6.500h3.500L9 2.500v13l-4.500-4H1z" fill="none" stroke="#fff" stroke-width="1.300"/><path d="M11.500 6q2 3 0 6M14 4q3.500 5 0 10" fill="none" stroke="#fff" stroke-width="1.300"/><path d="M16.500 2q4.500 7 0 14" fill="none" stroke="#777"/></svg>
    <svg class="bat" width="21" height="18"><rect x="2" y="6" width="15.500" height="10" rx="2.500" fill="none" stroke="#fff" stroke-width="1.400"/><path d="M4.500 8.500h10.500v5H4.500zM18.500 9h1.500v4h-1.500z" fill="#fff"/><path d="m4.500 0-4 7h3L2 11l6-6H5l2-5z" fill="#fff" stroke="#202327" stroke-width=".6"/></svg>
    <div class="clock"><span>18:12</span><span>30/6/2567</span></div>
    <svg class="bell" width="18" height="20"><path d="M2 15q1.500-2 1.500-7a5.500 5.500 0 0 1 11 0q0 5 1.500 7zM6.500 16.500h5q-2.500 4-5 0z" fill="#67f3ff" stroke="#67f3ff"/></svg>
    <svg class="cop" width="34" height="34" viewBox="0 0 34 34"><path d="M6 3q1-2 4-2h7q3 0 4 3l1 4h-6l-5 14q-1 3-4 3-5 0-5-4 0-4 4-18z" fill="url(#gp)"/><path d="M22 8h3q4 0 4 5-1 8-3 14h-11l4-14q1-5 3-5z" fill="url(#gq)"/><rect x="8" y="22" width="23" height="11" rx="3" fill="#ffc21a"/><text x="19.500" y="31.200" font-size="10" font-weight="700" text-anchor="middle" fill="#221a00">PRE</text></svg>
  </div>
</div>

<div class="popup">
  <div class="it"><i class="dot"></i><span>Disconnect</span><kbd>Ctrl-0</kbd></div><hr>
  <div class="it hot"><span>COM4</span><kbd>Ctrl-4</kbd></div><hr>
  <div class="it net"><span>Network connection</span><svg width="8" height="12"><path d="m1.500 1.500 4.500 4.500-4.500 4.500" fill="none" stroke="#333" stroke-width="1.400"/></svg></div><hr>
  <div class="it loc"><span>Location API</span></div>
  <div class="it off"><span>Sensor API</span><svg width="8" height="12"><path d="m1.500 1.500 4.500 4.500-4.500 4.500" fill="none" stroke="#a0a0a0" stroke-width="1.400"/></svg></div>
  <div class="it off"><span>Universal Gnss Driver (Win 10)</span></div>
</div>
<script src="dials.js"></script>
</body>
</html>
```
FILE: styles.css
```css
* { box-sizing: border-box; }
body { margin: 0; width: 1919px; height: 1079px; overflow: hidden; background: #f0f0f0; color: #111; font: 14.5px/20px "Open Sans", "Noto Sans", sans-serif; letter-spacing: -.3px; position: relative; display: flex; flex-direction: column; }
.defs { position: absolute; }
svg { display: block; flex: none; letter-spacing: 0; }
.title { height: 29px; background: linear-gradient(90deg, #f1f5fb, #eaf1f9 60%, #edf3fa); display: flex; align-items: center; padding-left: 2px; padding-bottom: 1px; }
.title .name { margin-left: 5px; letter-spacing: -.2px; }
.wc { margin-left: auto; display: flex; gap: 44px; padding-right: 25px; }
.menu { height: 26px; background: #fff; display: flex; align-items: center; padding-left: 9px; gap: 17.700px; border-bottom: 1px solid #a0a0a0; padding-bottom: 2px; letter-spacing: -.25px; }
.bar { height: 37px; display: flex; background: #fff; }
.band { display: flex; align-items: center; background: #f0f0f0; border-right: 1px solid #a0a0a0; border-bottom: 1px solid #a0a0a0; border-top: 1px solid #fff; padding-bottom: 1px; }
.bar2 .band { border-bottom: 0; }
.b1 { width: 317px; } .b2 { width: 736px; }
.c1 { width: 264px; } .c2 { width: 687px; } .c3 { width: 257px; }
.band b { width: 29px; height: 30px; flex: none; display: flex; align-items: center; justify-content: center; font-weight: 400; }
.band u { width: 18px; flex: none; display: flex; justify-content: center; }
.b2 u { width: 18.5px; } .c1 u { width: 18.5px; }
.band u::after { content: ""; border: 4.5px solid transparent; border-top: 5px solid #000; border-bottom: 0; }
.band s { width: 7px; height: 22px; flex: none; background: linear-gradient(90deg, transparent 3px, #a0a0a0 3px 4px, #fff 4px 5px, transparent 5px); }
.bar2 .band s { width: 7.5px; }
.grip { width: 12px; height: 22px; flex: none; background: radial-gradient(circle at 2px 2px, #b4b4b4 1.3px, transparent 1.6px) 4px 0 / 5px 5px repeat-y; }
.b2 .grip, .c2 .grip { width: 14px; background-position-x: 6px; }
.i { width: 18px; height: 18px; } .i.w { width: 19px; }
.b1, .b2 { padding-right: 1px; }
.b1 b, .b2 b { position: relative; left: -.5px; }
.band .on { width: 28.8px; height: 31px; border: 1px solid #a0a0a0; border-right-color: #fff; border-bottom-color: #fff; background: #f7f7f7; }
.band .up { width: 28.5px; height: 28px; border: 1px solid #fff; border-right-color: #888; border-bottom-color: #888; background: #f5f5f5; }
.band .dn { height: 28px; align-items: center; border: 1px solid #888; border-right-color: #fff; border-bottom-color: #fff; padding-left: 2px; }
.band .pause { background: repeating-conic-gradient(#fff 0 25%, #f0f0f0 0 50%) center / 2px 2px; height: 23px; width: 24px; margin: 0 2.5px; }
.band .t { color: #a0a0a0; font: 13px "Liberation Sans", sans-serif; gap: 1px; }
.work { height: 865px; display: flex; border-top: 1px solid #a0a0a0; }
.mdi { width: 671px; background: #ababab; border-left: 2px solid #777; border-top: 2px solid #777; margin-bottom: 2px; }
.dock { display: flex; flex-direction: column; border-left: 1px solid #fff; }
.left { width: 575px; padding-left: 1px; border-right: 1px solid #a0a0a0; }
.right { width: 673px; }
.pane { flex: none; display: flex; flex-direction: column; padding: 0 4px 5px 3px; border-top: 1px solid #fff; border-bottom: 1px solid #a0a0a0; }
.right .pane { padding-left: 4px; }
.head { height: 19px; display: flex; align-items: center; gap: 7px; padding: 1px 3px 0 1px; }
.head i { flex: 1; height: 7px; border-right: 1px solid #a0a0a0; background: linear-gradient(#fff 0 2px, #a0a0a0 2px 3px, #fff 3px 5px, transparent 5px 6px, #a0a0a0 6px 7px); }
.head em { font: 700 14px/12px "Open Sans", sans-serif; color: #000; width: 9px; margin-top: -3px; text-align: center; letter-spacing: 0; }
.right .head { padding-right: 2px; }
.view { flex: 1; min-height: 0; background: #000; border: 2px solid #fff; border-top-color: #707070; border-left-color: #8a8a8a; color: #c8c8c8; overflow: hidden; font: 14px/16px "Liberation Sans", sans-serif; letter-spacing: -.55px; }
.view > svg { width: 100%; height: 100%; }
.lbl text { font: 14px "Liberation Sans", sans-serif; letter-spacing: -.5px; fill: #c8c8c8; text-anchor: middle; }
.crisp { shape-rendering: crispEdges; }
.tick { stroke: #c0c0c0; stroke-width: 1.1; }
.map { display: flex; flex-direction: column; }
.map > svg { flex: none; height: 361px; margin-bottom: -38px; }
.map path { fill: none; vector-effect: non-scaling-stroke; stroke: #d2d2d2; stroke-width: 1; }
.coast path { shape-rendering: crispEdges; }
.map .grid { stroke: #5a5a5a; stroke-dasharray: 4 4; }
.map .edge { stroke: #c0c0c0; }
.pos { display: flex; justify-content: space-between; padding: 0 7px 0 7px; height: 16.300px; position: relative; }
.pos span:last-child { font-size: 10px; line-height: 20px; }
.map .pos { top: 1px; }
.data { padding-top: 6px; }
.data p { margin: 0 5px 0 6px; height: 16.200px; display: flex; }
.data span { width: 77px; line-height: 19px; white-space: nowrap; }
.data q { flex: 1; quotes: none; background: #404040; border: 1px solid #383838; border-bottom: 1px solid #000; color: #f00; text-align: right; line-height: 15px; margin-top: 1px; }
.status { height: 26px; display: flex; padding-top: 4px; background: #f0f0f0; border-top: 1px solid #fff; letter-spacing: -.1px; }
.msg { width: 672px; padding-left: 3px; }
.cell { flex: none; display: flex; align-items: center; gap: 6px; padding-left: 2px; border-left: 1px solid #a0a0a0; border-top: 1px solid #a0a0a0; border-right: 1px solid #fff; white-space: nowrap; height: 21px; }
.tight { padding-left: 1px; letter-spacing: -.5px; }
.last { flex: 1; margin-left: 3px; padding-left: 4px; }
.task { height: 59px; background: linear-gradient(90deg, #202323, #222527 30%, #242329 48%, #202730 78%, #232425 90%, #1f2224); border-top: 1px solid #4a4a4a; display: flex; color: #fff; }
.weather { width: 475px; display: flex; padding: 7px 0 0 24px; }
.weather div { display: flex; flex-direction: column; margin-left: -4px; padding-top: 2px; font-size: 14px; }
.weather .th { color: #ccc; font-size: 13.500px; line-height: 20px; letter-spacing: -.5px; }
.start { margin-top: 15px; }
.search { width: 275px; height: 40px; margin: 9px 0 0 16px; border-radius: 20px; background: #3b3c3f; border: 1px solid #505154; display: flex; align-items: center; padding: 0 6px 0 14px; color: #ddd; }
.search span { margin-left: 11px; font-size: 16px; letter-spacing: -.1px; }
.search .art { margin-left: auto; }
.apps { display: flex; margin-left: 2px; }
.apps a { width: 55px; display: flex; align-items: center; justify-content: center; position: relative; }
.apps a:first-child { padding: 0 0 6px 5px; }
.run::after, .act::after { content: ""; position: absolute; bottom: 4px; left: 23px; width: 8px; height: 4px; border-radius: 2px; background: #999; }
.apps .act { width: 50px; height: 50px; margin: 4px 0 0 3px; background: #2d3035; border: 1px solid #3a3d42; border-radius: 5px; }
.act::after { width: 20px; left: 14px; bottom: 0; background: #2ee8f8; }
.tray { display: flex; align-items: center; margin-left: 98px; }
.eng { margin-left: 27px; width: 30px; font-size: 14px; }
.wifi { margin-left: 21px; } .snd { margin-left: 10px; } .bat { margin-left: 9px; }
.clock { width: 89px; display: flex; flex-direction: column; text-align: right; font-size: 14.500px; }
.bell { margin-left: 11px; } .cop { margin-left: 18px; }
.popup { position: absolute; left: 13px; top: 126px; width: 356px; height: 204px; background: #f9f9f9; border: 1px solid #e4e4e4; border-radius: 6px; box-shadow: 0 7px 12px rgba(0,0,0,.28); padding: 1px 6px; display: flex; flex-direction: column; }
.it { height: 27.500px; border-radius: 5px; display: flex; align-items: center; padding: 0 13px 0 40px; position: relative; flex: none; }
.it kbd { font: inherit; margin-left: auto; width: 50px; padding-right: 12px; }
.it svg { margin-left: auto; }
.popup hr { margin: 4px 4px 5px 4px; border: 0; height: 2px; background: #dedede; flex: none; }
.popup .hot { background: #f0f0f0; }
.off { color: #a0a0a0; }
.dot { position: absolute; left: 5px; top: 4px; width: 19px; height: 19px; background: radial-gradient(circle at 10px 9px, #000 2.300px, #f1f1f1 3px); }
.net svg, .off svg { margin-right: -1px; }
```
FILE: dials.js
```js
const NS = "http://www.w3.org/2000/svg";
function add(parent, d, attrs) {
  const p = document.createElementNS(NS, "path");
  p.setAttribute("d", d);
  for (const k in attrs || {}) p.setAttribute(k, attrs[k]);
  parent.appendChild(p);
}
// one radial tick, angle in degrees clockwise from the top
function tick(a, r0, r1) {
  const t = a * Math.PI / 180, s = Math.sin(t), c = -Math.cos(t);
  return `M${(s * r0).toFixed(1)} ${(c * r0).toFixed(1)}L${(s * r1).toFixed(1)} ${(c * r1).toFixed(1)}`;
}
let d = "";
for (let i = 0; i <= 25; i++) {
  d += tick(-135 + i * 10.8, i % 5 ? 31 : 30, i % 5 ? 35 : 38);
}
add(document.getElementById("speed"), d);
d = "";
for (let i = 0; i < 50; i++) d += tick(i * 7.2, i % 5 ? 16 : 15, i % 5 ? 17.6 : 19);
add(document.getElementById("clock"), d);
d = "";
for (let i = 0; i < 60; i++) d += tick(i * 6, 46.5, i % 15 === 0 ? 61.5 : i % 5 === 0 ? 56 : 52);
add(document.getElementById("head"), d);

// unwrapped sky strip: noisy coast echoes under a meridian grid
const sky = document.getElementById("sky");
let seed = 7;
const rnd = () => (seed = (seed * 16807) % 2147483647) / 2147483647;
const fixed = { fill: "none", "vector-effect": "non-scaling-stroke" };
d = "";
for (let y = 1240; y < 1463; y += 9) d += `M23 ${y}H1537`;
add(sky, d, { ...fixed, stroke: "#121212" });
d = "";
for (let k = 1; k < 24; k++) d += `M${(23.5 + k * 63.1).toFixed(1)} 1236V1463`;
add(sky, d, { ...fixed, stroke: "#8f8f8f" });
// each cloud: x range, y range, number of flecks
const clouds = [
  [250, 530, 1266, 1292, 150], [370, 520, 1250, 1316, 170], [440, 560, 1290, 1350, 80],
  [460, 530, 1360, 1450, 60], [430, 660, 1422, 1450, 60], [660, 715, 1255, 1290, 40],
  [705, 800, 1300, 1352, 70], [800, 920, 1286, 1372, 230], [900, 1020, 1310, 1368, 100],
  [1000, 1180, 1270, 1345, 80], [1160, 1420, 1325, 1362, 170], [1250, 1340, 1320, 1375, 60],
  [1340, 1530, 1295, 1350, 110], [23, 130, 1288, 1306, 50], [830, 900, 1260, 1272, 30],
  [1160, 1220, 1255, 1275, 30], [1450, 1500, 1415, 1455, 20], [23, 220, 1330, 1362, 40],
  [1340, 1537, 1360, 1400, 26], [950, 1060, 1250, 1280, 36], [620, 1150, 1365, 1420, 18]
];
let hi = "", lo = "";
for (const [x0, x1, y0, y1, n] of clouds) for (let i = 0; i < n; i++) {
  const x = x0 + rnd() * (x1 - x0), y = y0 + (rnd() + rnd()) / 2 * (y1 - y0);
  const s = `M${x.toFixed(1)} ${y.toFixed(1)}l${(3 + rnd() * 9).toFixed(1)} ${(rnd() * 8 - 4).toFixed(1)}`;
  if (rnd() > .6) hi += s; else lo += s;
}
add(sky, lo, { ...fixed, stroke: "#7a7a7a" });
add(sky, hi, { ...fixed, stroke: "#c4c4c4" });
const lines = [
  [23, 1294, 100, 1298, 180, 1302, 240, 1308, 270, 1326, 340, 1334, 430, 1338, 520, 1350, 600, 1358, 640, 1354],
  [130, 1286, 250, 1282, 300, 1272, 420, 1256, 520, 1248, 640, 1246, 720, 1254],
  [120, 1430, 240, 1422, 360, 1418, 460, 1416, 540, 1400], [140, 1450, 115, 1430, 150, 1434],
  [440, 1430, 540, 1446, 650, 1434, 720, 1416, 860, 1412, 990, 1406, 1080, 1412, 1240, 1404, 1370, 1408, 1480, 1414, 1455, 1440, 1500, 1454],
  [530, 1276, 570, 1298, 640, 1296, 720, 1294], [980, 1290, 1080, 1286, 1180, 1270, 1240, 1276, 1360, 1280, 1470, 1286, 1537, 1286],
  [1180, 1346, 1290, 1350, 1420, 1356, 1537, 1340], [1060, 1326, 1200, 1340, 1300, 1330, 1400, 1310, 1537, 1298]
];
d = "";
for (const l of lines) {
  for (let i = 2; i < l.length; i += 2) {
    const dx = l[i] - l[i - 2], dy = l[i + 1] - l[i - 1], n = Math.ceil(Math.abs(dx) / 9);
    for (let k = 0; k < n; k++) {
      const x = l[i - 2] + dx * k / n, y = l[i - 1] + dy * k / n + rnd() * 5 - 2.5;
      if (rnd() > .12) d += `M${x.toFixed(1)} ${y.toFixed(1)}l${(dx / n).toFixed(1)} ${(rnd() * 4 - 2).toFixed(1)}`;
    }
  }
}
add(sky, d, { ...fixed, stroke: "#9c9c9c" });
add(sky, "M533 1275 560 1280 572 1300 556 1292zM462 1388 490 1372 510 1384 480 1384zM470 1416 530 1402 500 1416z", { fill: "#d8d8d8" });
add(sky, "M782 1319V1382M748 1351H818", { ...fixed, stroke: "#b0b0b0" });
add(sky, "M766 1351a16 18 0 1 0 32 0a16 18 0 1 0-32 0", { fill: "#000", stroke: "#b8b8b8", "vector-effect": "non-scaling-stroke" });
```
